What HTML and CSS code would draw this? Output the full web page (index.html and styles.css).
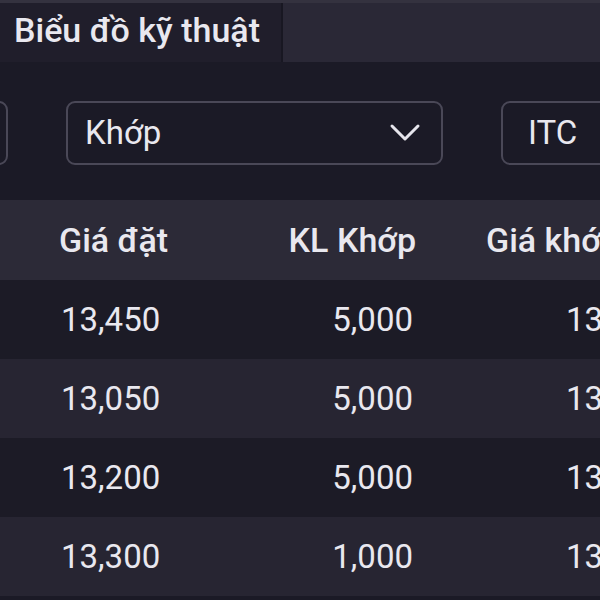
FILE: index.html
```html
<!DOCTYPE html>
<html lang="vi">
<head>
<meta charset="utf-8">
<link rel="stylesheet" href="styles.css">
</head>
<body>
<div class="page">
  <div class="tabbar">
    <div class="tab active">Biểu đồ kỹ thuật</div>
    <div class="tab-rest"></div>
  </div>
  <div class="filters">
    <div class="field field-cut"></div>
    <div class="field field-select">
      <span class="field-text">Khớp</span>
      <svg class="chevron" width="32" height="20" viewBox="0 0 32 20"><path d="M3 3 L16 16 L29 3" fill="none" stroke="#e6e5ec" stroke-width="3" stroke-linecap="round" stroke-linejoin="round"/></svg>
    </div>
    <div class="field field-code"><span class="field-text">ITC</span></div>
  </div>
  <div class="table">
    <div class="row head">
      <div class="c1">Giá đặt</div>
      <div class="c2">KL Khớp</div>
      <div class="c3">Giá khớp</div>
    </div>
    <div class="row dark">
      <div class="c1">13,450</div>
      <div class="c2">5,000</div>
      <div class="c3">13,450</div>
    </div>
    <div class="row light">
      <div class="c1">13,050</div>
      <div class="c2">5,000</div>
      <div class="c3">13,050</div>
    </div>
    <div class="row dark">
      <div class="c1">13,200</div>
      <div class="c2">5,000</div>
      <div class="c3">13,200</div>
    </div>
    <div class="row light">
      <div class="c1">13,300</div>
      <div class="c2">1,000</div>
      <div class="c3">13,300</div>
    </div>
  </div>
</div>
</body>
</html>
```
FILE: styles.css
```css
* { box-sizing: border-box; }
html, body {
  margin: 0;
  padding: 0;
  background: #1b1a26;
  overflow: hidden;
}
.page {
  width: 600px;
  height: 600px;
  overflow: hidden;
  font-family: Roboto, "Noto Sans", sans-serif;
  color: #e9e8ef;
}
.tabbar {
  display: flex;
  height: 62px;
  background: #2a2836;
  border-top: 3px solid #34323f;
}
.tab {
  width: 283px;
  padding-left: 14px;
  padding-bottom: 6px;
  display: flex;
  align-items: center;
  font-size: 34px;
  font-weight: 500;
  background: #201e2b;
  border-right: 2px solid #181722;
  white-space: nowrap;
}
.tab-rest { flex: 1; }
.filters {
  height: 138px;
  display: flex;
  align-items: center;
  gap: 58px;
  margin-left: -113px;
  padding-top: 3px;
}
.field {
  flex: none;
  height: 64px;
  border: 2px solid #4a4857;
  border-radius: 9px;
  display: flex;
  align-items: center;
  padding-left: 17px;
  font-size: 33px;
}
.field-cut { width: 121px; }
.field-select {
  width: 377px;
  justify-content: space-between;
  padding-right: 20px;
}
.field-code { width: 200px; padding-left: 25px; }
.chevron { display: block; }
.table { display: flex; flex-direction: column; }
.row {
  display: grid;
  grid-template-columns: 180px 177px 1fr;
  padding-left: 61px;
  align-items: center;
  height: 79px;
  font-size: 33px;
  white-space: nowrap;
}
.row.head {
  height: 80px;
  background: #2c2a37;
  font-weight: 500;
  font-size: 34px;
  padding-left: 59px;
}
.row.head .c2 { padding-right: 0; }
.row.head .c3 { padding-left: 70px; }
.row.dark { background: #1c1b26; }
.row.light { background: #272532; }
.c2 { text-align: right; padding-right: 5px; }
.c3 { padding-left: 148px; }
```
